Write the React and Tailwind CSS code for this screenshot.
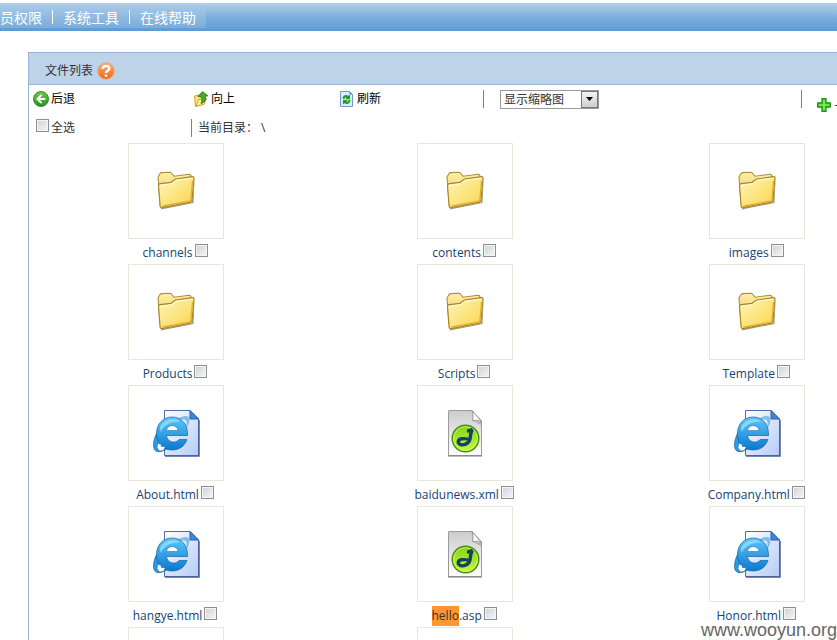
import { ArrowLeft } from "lucide-react";

const files = [
  { name: "channels", type: "folder" },
  { name: "contents", type: "folder" },
  { name: "images", type: "folder" },
  { name: "Products", type: "folder" },
  { name: "Scripts", type: "folder" },
  { name: "Template", type: "folder" },
  { name: "About.html", type: "html" },
  { name: "baidunews.xml", type: "code" },
  { name: "Company.html", type: "html" },
  { name: "hangye.html", type: "html" },
  { name: "hello.asp", type: "code", match: "hello" },
  { name: "Honor.html", type: "html" },
];

function Gradient({ id, from, to, diagonal }) {
  return (
    <linearGradient id={id} x1="0" y1="0" x2={diagonal ? "1" : "0"} y2="1">
      <stop offset="0" stopColor={from} />
      <stop offset="1" stopColor={to} />
    </linearGradient>
  );
}

function IconDefs() {
  return (
    <svg className="absolute h-0 w-0" aria-hidden="true">
      <defs>
        <Gradient id="folderFront" from="#fff6b8" to="#fad44c" diagonal />
        <Gradient id="folderBack" from="#fdf0a8" to="#e8bf4a" />
        <Gradient id="pageBlue" from="#ffffff" to="#b4cbf8" diagonal />
        <Gradient id="ieBlue" from="#5cc8fa" to="#0b78d0" />
        <Gradient id="pageGray" from="#cccccc" to="#ffffff" />
        <Gradient id="discGreen" from="#86d01c" to="#c4fa3c" />
        <Gradient id="orange" from="#fbab72" to="#ee6a1e" />
      </defs>
    </svg>
  );
}

function FolderIcon() {
  return (
    <svg width="40" height="40" viewBox="0 0 40 40" aria-hidden="true">
      <path d="M5 37 L36 31.500 L38.500 9 L37.500 32 L5 38.500Z" fill="#77705a" opacity=".7" />
      <path d="M2 6 L4 2.500 Q4.500 1.700 6 1.600 L13.500 1.300 Q15 1.300 15.800 2.500 L18 5.200 L33 3.300 Q35 3.300 35 5.500 L37 7 L35 30 L4.500 35Z" fill="url(#folderBack)" stroke="#b08f38" strokeWidth="1.100" />
      <path d="M2.500 14.500 Q2.400 12.800 4.200 12.600 L15 11.300 L19.500 8 L36.500 5.700 Q38.300 5.600 38 7.500 L36 29.500 Q35.800 31 34.300 31.300 L6 36.600 Q4.200 36.800 4.100 35Z" fill="url(#folderFront)" stroke="#a8842c" strokeWidth="1.200" />
      <path d="M3.900 14.700 L15.300 12.700 L20 9.400 L36.700 7.200" fill="none" stroke="#fffde6" />
      <path d="M36.500 10 L34.800 29.800 L6 35.200" fill="none" stroke="#e0ac2c" strokeWidth="1.200" />
    </svg>
  );
}

function HtmlIcon() {
  return (
    <svg width="48" height="48" viewBox="0 0 48 48" aria-hidden="true">
      <path d="M12.500 1.500 H38 L46.500 10 V46.500 H12.500Z" fill="url(#pageBlue)" stroke="#4f6cae" />
      <path d="M13 47 H47 V11" fill="none" stroke="#4d5f92" strokeWidth="1.500" />
      <path d="M38 1.500 L46.500 10 H38Z" fill="#3f87dc" stroke="#2a5fb0" />
      <path d="M26 9.500 C32 6 38 6 37.500 11 C37.300 15 35.500 18 33.500 20 C35 15 35.500 11 32 10.500 C30 10.200 28 10.600 26 11.500Z" fill="#7fbce6" />
      <path d="M17 10 C9 15 1 27 1.500 37 C2 44 8 44.500 16 39 L13 36 C8 40 5 40 5.500 35.500 C6.500 31 9 25 13 20Z" fill="#2c9be6" stroke="#1263a8" strokeWidth=".7" />
      <path d="M20 8 C29.500 8 36 15 35.500 26.500 H14.500 C15 33.500 24 35 27 30.500 H35 C32.500 37.500 27 41 20 41 C10.500 41 4.500 34.500 4.500 24.500 C4.500 15 11 8 20 8Z" fill="url(#ieBlue)" stroke="#1263a8" strokeWidth=".7" />
      <path d="M14.500 21.500 C15 15 25.500 15 26 21.500Z" fill="#ffffff" stroke="#1263a8" strokeWidth=".5" />
      <path d="M8 18 C11 11 22 8 28 12.500 C19 12 12 16 8.500 23Z" fill="#a6e0fc" opacity=".7" />
      <path d="M5.500 34.500 L9 35 L9.500 37.500 L13.500 37.500 L11.500 41.500 L7.500 42 L5 39Z" fill="#fff" stroke="#1263a8" strokeWidth=".6" />
    </svg>
  );
}

function CodeIcon() {
  return (
    <svg width="36" height="48" viewBox="0 0 36 48" aria-hidden="true">
      <path d="M1.500 2 Q1.500 1.500 2 1.500 H25 L34.500 12 V46.500 H1.500Z" fill="url(#pageGray)" stroke="#9b9b9b" />
      <path d="M1 47 H35" stroke="#777" />
      <path d="M25 1.500 Q27 7 25.500 11.500 Q30 10.500 34.500 12.500Z" fill="#fff" stroke="#858585" strokeWidth=".8" />
      <path d="M25.500 12 L34 13 V16Z" fill="#999" opacity=".6" />
      <circle cx="18.500" cy="29.500" r="13.300" fill="url(#discGreen)" stroke="#4b8c17" strokeWidth="1.400" />
      <circle cx="18.500" cy="29.500" r="11.900" fill="none" stroke="#d4f774" opacity=".7" />
      <path d="M20 21.800 C21.500 22 23 21.600 25.500 20.600 C23.300 23 23.600 27 23 30 C21.500 35.500 16 36.500 13.200 35.400 C10 33.800 11 30.400 14.500 29.800 C18 29.200 21.500 30 24 31" fill="none" stroke="#12445f" strokeWidth="3.400" />
    </svg>
  );
}

function Thumb({ type }) {
  if (type === "folder") return <FolderIcon />;
  return type === "html" ? <HtmlIcon /> : <CodeIcon />;
}

function HelpIcon() {
  return (
    <svg width="18" height="18" viewBox="0 0 18 18" aria-hidden="true">
      <circle cx="9" cy="9" r="8.300" fill="url(#orange)" stroke="#f0a173" strokeWidth=".8" />
      <path d="M5.700 7 C5.700 3 12.300 3 12.300 6.500 C12.300 8.800 9 8.600 9 11 M9 12.500 V14.800" fill="none" stroke="#fff" strokeWidth="2.400" />
    </svg>
  );
}

function BackIcon() {
  return (
    <span className="flex h-4 w-4 items-center justify-center rounded-full border border-[#2c8a22] bg-linear-to-b from-[#6cc94f] to-[#1f9420]">
      <ArrowLeft size={12} strokeWidth={4} color="#fff" />
    </span>
  );
}

function UpIcon() {
  return (
    <svg width="16" height="16" viewBox="0 0 16 16" aria-hidden="true">
      <path d="M1.500 5 L6 4 L7 5.500 L11 5 V13 L2.500 15.500Z" fill="#fbe387" stroke="#d4a32f" />
      <path d="M3 15 L5.500 8.500 L13.500 7.500 L11 13.500Z" fill="#fff0a5" stroke="#d4a32f" />
      <path d="M5 5.500 L9.500 .6 L14.800 4.800 L12.300 5.300 C13 9.500 11.500 11.800 8 12.500 C9.500 9.500 9 7.500 8 5.700Z" fill="#42ad27" stroke="#1d7414" strokeWidth=".8" />
    </svg>
  );
}

function RefreshIcon() {
  return (
    <svg width="13" height="16" viewBox="0 0 13 16" aria-hidden="true">
      <path d="M.5 .5 H9.500 L12.500 3.500 V15.500 H.5Z" fill="#dfeafc" stroke="#7595cf" />
      <path d="M9.500 .5 V3.500 H12.500Z" fill="#4e83d2" />
      <path d="M2.500 7.700 C2.800 3.600 7 3.400 8.500 5 L10 3.500 V8.300 H5.200 L6.700 6.800 C5.500 6 4.600 6.700 4.500 8Z M10.500 9 C10.200 13.400 6 13.600 4.500 12 L3 13.500 V9 H7.800 L6.300 10.400 C7.500 11.200 8.400 10.500 8.500 9Z" fill="#1d9a2b" />
    </svg>
  );
}

function PlusIcon() {
  return (
    <svg width="14" height="14" viewBox="0 0 14 14" aria-hidden="true">
      <path d="M5 .7 H9 V5 H13.300 V9 H9 V13.300 H5 V9 H.7 V5 H5Z" fill="#58d136" stroke="#1d9416" strokeWidth="1.300" />
      <path d="M7 2 V12 M2 7 H12" stroke="#92ee6b" strokeWidth="1.200" />
    </svg>
  );
}

const checkbox =
  "h-[13px] w-[13px] shrink-0 appearance-none border border-[#8e8f8f] bg-linear-to-br from-[#cfd2d6] to-[#f6f6f6] shadow-[inset_0_0_0_1px_#f4f4f4] checked:bg-[#3b72b8]";

function FileTile({ file }) {
  const id = "file-" + file.name;
  const rest = file.match ? file.name.slice(file.match.length) : file.name;
  return (
    <li className="flex h-[121px] flex-col items-center">
      <a
        href="#"
        aria-label={file.name}
        className="flex h-24 w-24 shrink-0 items-center justify-center border border-[#e9e6da]"
      >
        <Thumb type={file.type} />
      </a>
      <div className="flex h-6 items-start gap-0.5 pt-1 pr-0.5">
        <label htmlFor={id} className="leading-5 text-[#164373]">
          {file.match && (
            <mark className="inline-block bg-[#ff9632] text-[#333333]">{file.match}</mark>
          )}
          {rest}
        </label>
        <input id={id} type="checkbox" className={"mt-px " + checkbox} />
      </div>
    </li>
  );
}

export default function App() {
  return (
    <div className="relative h-screen overflow-hidden bg-white font-['Open_Sans','Noto_Sans_CJK_SC',sans-serif] text-xs text-[#333333]">
      <IconDefs />
      <nav className="mt-[3px] flex h-7 bg-linear-to-b from-[#b4cfe8] via-[#7fb0dc] to-[#5b9bd5] pt-[3px] text-sm leading-[22px]">
        <div className="flex h-[22px] items-center gap-2.5 bg-linear-to-b from-[#a4c8e8] to-[#79addb] pr-2.5 font-['Noto_Sans_CJK_SC',sans-serif] text-white">
          <a href="#">员权限</a>
          <span className="h-3.5 w-px bg-white" />
          <a href="#">系统工具</a>
          <span className="h-3.5 w-px bg-white" />
          <a href="#">在线帮助</a>
        </div>
      </nav>

      <main className="mt-[21px] ml-7 border-t border-l border-[#9ab5d3]">
        <header className="flex h-8 items-center gap-1 border-b border-[#9ab5d3] bg-[#bdd3e8] pt-1 pl-4">
          <h1>文件列表</h1>
          <button type="button" aria-label="?">
            <HelpIcon />
          </button>
        </header>

        <div className="flex h-7 items-center pl-1 text-black">
          <button type="button" className="flex w-40 items-center gap-0.5">
            <BackIcon />
            后退
          </button>
          <button type="button" className="flex w-[147px] items-center gap-0.5">
            <UpIcon />
            向上
          </button>
          <button type="button" className="flex w-[143px] items-center gap-1">
            <RefreshIcon />
            刷新
          </button>
          <span className="h-[18px] w-px shrink-0 bg-[#808080]" />
          <div className="relative ml-4 w-[99px] shrink-0">
            <select
              aria-label="显示缩略图"
              className="block h-[19px] w-full appearance-none rounded-none border border-[#9a9a9a] bg-white pl-[3px] text-xs leading-[18px] text-[#333333]"
            >
              <option>显示缩略图</option>
            </select>
            <span className="pointer-events-none absolute inset-y-px right-px flex w-[17px] items-center justify-center border border-[#777777] bg-linear-to-b from-[#f4f4f4] to-[#cfcfcf]">
              <svg width="7" height="4" viewBox="0 0 7 4" aria-hidden="true">
                <path d="M0 0 H7 L3.500 4Z" fill="#000" />
              </svg>
            </span>
          </div>
          <span className="ml-auto h-[18px] w-px shrink-0 bg-[#808080]" />
          <a href="#" className="mt-3 ml-[15px] flex shrink-0 items-center gap-1">
            <PlusIcon />
            <span className="h-px w-0.5 bg-[#164373]" />
          </a>
        </div>

        <div className="flex h-[30px] items-center pl-[7px]">
          <div className="flex w-[155px] items-center gap-0.5">
            <input id="all" type="checkbox" className={"mb-1.5 " + checkbox} />
            <label htmlFor="all">全选</label>
          </div>
          <span className="mr-1.5 h-[18px] w-px bg-[#808080]" />
          <span>当前目录： \</span>
        </div>

        <ul className="grid w-[108.7%] grid-cols-[294fr_284fr_300fr]">
          {files.map((file) => (
            <FileTile key={file.name} file={file} />
          ))}
          {["a", "b", "c"].map((key) => (
            <li key={key} className="mx-auto h-24 w-24 border border-[#e9e6da]" />
          ))}
        </ul>
      </main>

      <p className="absolute right-0 bottom-0 font-['Liberation_Sans',Arial,sans-serif] text-lg leading-5 text-[#666666]">
        www.wooyun.org
      </p>
    </div>
  );
}
